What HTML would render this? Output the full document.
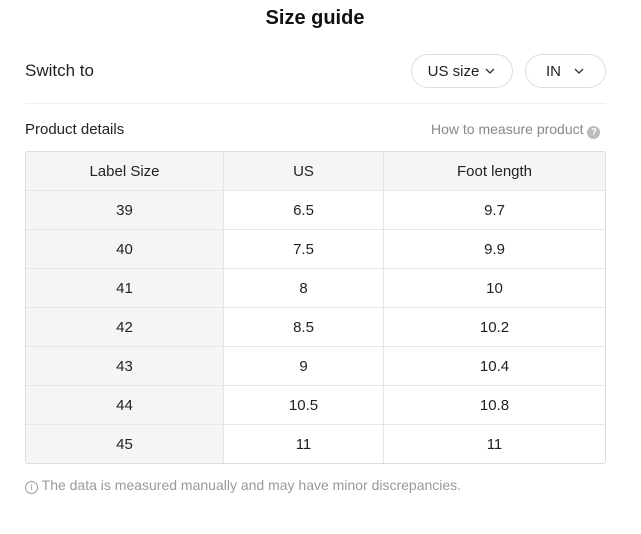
<!DOCTYPE html>
<html><head><meta charset="utf-8"><style>
body{margin:0;width:641px;height:534px;background:#fff;font-family:"Liberation Sans",sans-serif;color:#222;position:relative;overflow:hidden}
.a{position:absolute}
.title{left:0;width:630px;top:7px;text-align:center;font-size:20px;font-weight:bold;color:#111}
.btn{top:54px;height:32px;border:1px solid #ddd;border-radius:17px;font-size:15px;display:flex;align-items:center;justify-content:center;color:#222}
table{position:absolute;left:25px;top:151px;width:581px;border-collapse:separate;border-spacing:0;border:1px solid #ddd;border-radius:3px;font-size:15px;overflow:hidden}
td{height:38px;text-align:center;border-bottom:1px solid #e6e6e6;border-left:1px solid #e6e6e6;padding:0}
tr td:first-child{border-left:none;background:#f5f5f5;width:197px}
tr:last-child td{border-bottom:none}
tr:first-child td{background:#f5f5f5}
</style></head><body>
<div class="a title">Size guide</div>
<div class="a" style="left:25px;top:61px;font-size:17px">Switch to</div>
<div class="a btn" style="left:411px;width:100px">US size <svg width="12" height="8" style="margin-left:5px" viewBox="0 0 12 8"><path d="M2 2l4 4 4-4" fill="none" stroke="#333" stroke-width="1.3"/></svg></div>
<div class="a btn" style="left:525px;width:79px">IN <svg width="12" height="8" style="margin-left:12px" viewBox="0 0 12 8"><path d="M2 2l4 4 4-4" fill="none" stroke="#333" stroke-width="1.3"/></svg></div>
<div class="a" style="left:25px;top:103px;width:581px;height:1px;background:#eee"></div>
<div class="a" style="left:25px;top:121px;font-size:15px">Product details</div>
<div class="a" style="left:431px;top:121px;font-size:14px;color:#888">How to measure product <span style="display:inline-block;width:13px;height:13px;border-radius:50%;background:#bbb;color:#fff;font-size:10px;text-align:center;line-height:13px;font-weight:bold;vertical-align:-1px">?</span></div>
<table>
<tr><td>Label Size</td><td style="width:159px">US</td><td>Foot length</td></tr>
<tr><td>39</td><td>6.5</td><td>9.7</td></tr>
<tr><td>40</td><td>7.5</td><td>9.9</td></tr>
<tr><td>41</td><td>8</td><td>10</td></tr>
<tr><td>42</td><td>8.5</td><td>10.2</td></tr>
<tr><td>43</td><td>9</td><td>10.4</td></tr>
<tr><td>44</td><td>10.5</td><td>10.8</td></tr>
<tr><td>45</td><td>11</td><td>11</td></tr>
</table>
<div class="a" style="left:25px;top:477px;font-size:14px;color:#999"><span style="display:inline-block;width:11px;height:11px;border:1px solid #999;border-radius:50%;font-size:9px;text-align:center;line-height:11px;vertical-align:0">i</span> The data is measured manually and may have minor discrepancies.</div>
</body></html>
